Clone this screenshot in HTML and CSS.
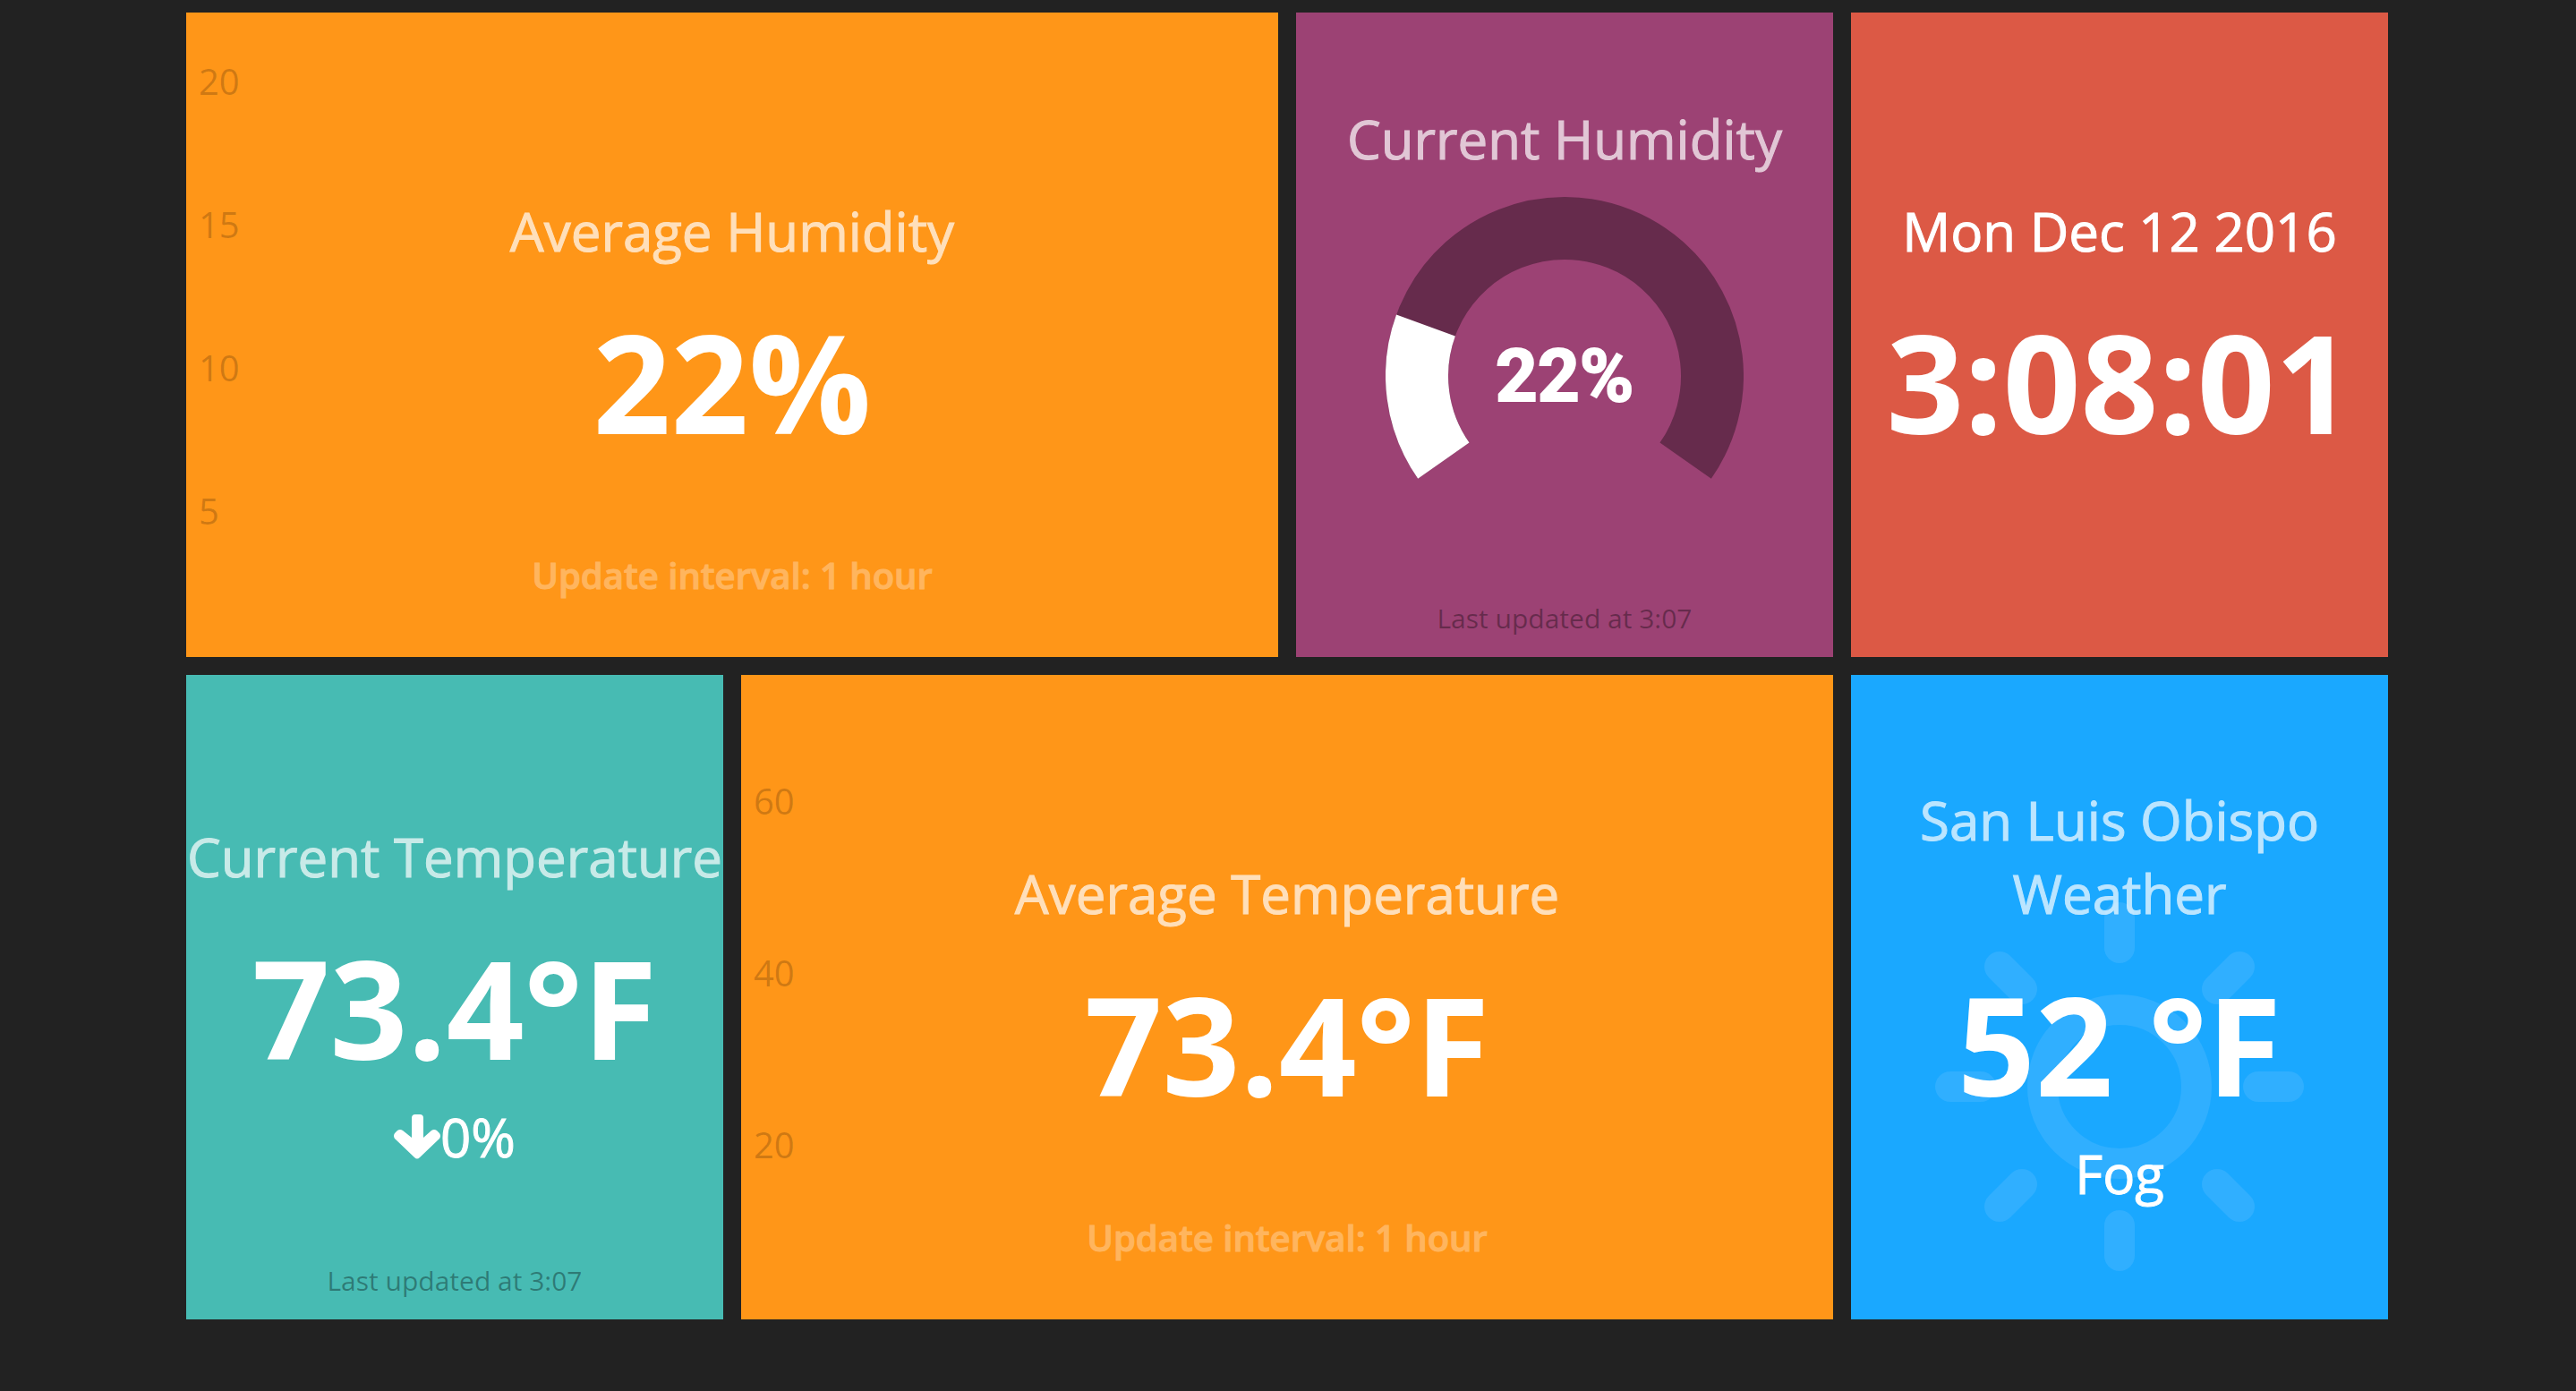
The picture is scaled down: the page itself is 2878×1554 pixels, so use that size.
FILE: index.html
```html
<!DOCTYPE html>
<html lang="en">
<head>
<meta charset="utf-8">
<title>Sensor Dashboard</title>
<link rel="stylesheet" href="styles.css">
</head>
<body>
<main class="board">
  <section class="tile tile-graph tile-wide">
    <ol class="axis axis-humidity"><li>20</li><li>15</li><li>10</li><li>5</li></ol>
    <h1 class="title">Average Humidity</h1>
    <p class="value">22%</p>
    <p class="more-info">Update interval: 1 hour</p>
  </section>

  <section class="tile tile-meter">
    <h1 class="title">Current Humidity</h1>
    <div class="meter">
      <svg class="meter-arc" viewBox="-200 -200 400 400" aria-hidden="true">
        <path class="arc-track" d="M-135.16 94.64A165 165 0 1 1 135.16 94.64"/>
        <path class="arc-value" d="M-135.16 94.64A165 165 0 0 1 -155.05 -56.43"/>
      </svg>
      <span class="meter-value">22%</span>
    </div>
    <p class="updated">Last updated at 3:07</p>
  </section>

  <section class="tile tile-clock">
    <h1 class="title title-solid">Mon Dec 12 2016</h1>
    <p class="value">3:08:01</p>
  </section>

  <section class="tile tile-number">
    <h1 class="title">Current Temperature</h1>
    <p class="value">73.4°F</p>
    <p class="note">
      <svg class="arrow" viewBox="0 0 52 50" aria-hidden="true">
        <path d="M24 0h5q4 0 4 4v22l9-8q3-2 6 0l3 3q2 3 0 6L29 48q-3 3-6 0L1 27q-2-3 0-6l3-3q3-2 6 0l10 8V4q0-4 4-4z"/>
      </svg><span>0%</span>
    </p>
    <p class="updated">Last updated at 3:07</p>
  </section>

  <section class="tile tile-graph tile-wide">
    <ol class="axis axis-temperature"><li>60</li><li>40</li><li>20</li></ol>
    <h1 class="title">Average Temperature</h1>
    <p class="value">73.4°F</p>
    <p class="more-info">Update interval: 1 hour</p>
  </section>

  <section class="tile tile-weather">
    <svg class="sun" viewBox="-206 -206 412 412" aria-hidden="true">
      <circle r="86"/>
      <path d="M0-189v34M0 155v34M-189 0h34M155 0h34M-134-134l25 25M109 109l25 25M-134 134l25-25M109-109l25-25"/>
    </svg>
    <h1 class="title">San Luis Obispo Weather</h1>
    <p class="value">52 °F</p>
    <p class="note">Fog</p>
  </section>
</main>
</body>
</html>
```
FILE: styles.css
```css
* {
  box-sizing: border-box;
}

body {
  margin: 0;
  background: #222;
  color: #fff;
  font-family: "Open Sans", sans-serif;
}

h1, p, ol {
  margin: 0;
  padding: 0;
  font-weight: 400;
}

.board {
  display: grid;
  grid-template-columns: repeat(4, minmax(0, 1fr));
  grid-auto-rows: minmax(720px, auto);
  gap: 20px;
  padding: 14px 210px 80px 208px;
}

.tile {
  position: relative;
  display: flex;
  flex-direction: column;
  align-items: center;
  justify-content: center;
  padding-bottom: 2px;
  text-align: center;
}

.tile-wide { grid-column: span 2; }
.tile-graph { background: #ff9618; }
.tile-meter { background: #9c4274; }
.tile-clock { background: #dc5945; }
.tile-number { background: #47bbb3; }
.tile-weather { background: #1aa8ff; }

.title {
  position: relative;
  font-size: 60px;
  line-height: 82px;
  color: #fff;
  -webkit-text-stroke: 1px;
  opacity: 0.7;
}

.title-solid { opacity: 1; }

.value {
  position: relative;
  margin-top: 24px;
  font-size: 152px;
  line-height: 207px;
  font-weight: 700;
}

.note {
  position: relative;
  display: flex;
  align-items: center;
  justify-content: center;
  font-size: 60px;
  line-height: 82px;
  -webkit-text-stroke: 1px;
}

.arrow {
  width: 52px;
  height: 50px;
  fill: #fff;
}

.more-info {
  position: absolute;
  inset: auto 0 64px;
  font-size: 40px;
  line-height: 54px;
  font-weight: 600;
  -webkit-text-stroke: 1px;
  opacity: 0.3;
}

.updated {
  position: absolute;
  inset: auto 0 23px;
  font-size: 30px;
  line-height: 40px;
  color: rgba(0, 0, 0, 0.34);
}

/* y-axis tick labels laid over the left edge of a graph tile */
.axis {
  position: absolute;
  inset: 0 auto 0 14px;
  list-style: none;
  text-align: left;
  font-size: 40px;
  line-height: 54px;
  color: rgba(0, 0, 0, 0.2);
}

.axis-humidity { padding-top: 50px; }
.axis-humidity li { height: 160px; }
.axis-temperature { padding-top: 114px; }
.axis-temperature li { height: 192px; }

.meter {
  display: grid;
  place-items: center;
  width: 400px;
  height: 400px;
  margin: 24px 0 12px;
}

.meter-arc,
.meter-value {
  grid-area: 1 / 1;
}

.meter-arc {
  width: 100%;
  fill: none;
  stroke-width: 70px;
}

.arc-track { stroke: #662b4c; }
.arc-value { stroke: #fff; }

.meter-value {
  font-family: Roboto, Arial, sans-serif;
  font-size: 82px;
  line-height: 96px;
  font-weight: 700;
  -webkit-text-stroke: 2px;
}

.sun {
  position: absolute;
  top: 254px;
  left: 50%;
  width: 412px;
  height: 412px;
  margin-left: -206px;
  fill: none;
  stroke: #30afff;
  stroke-width: 34px;
  stroke-linecap: round;
}
```
